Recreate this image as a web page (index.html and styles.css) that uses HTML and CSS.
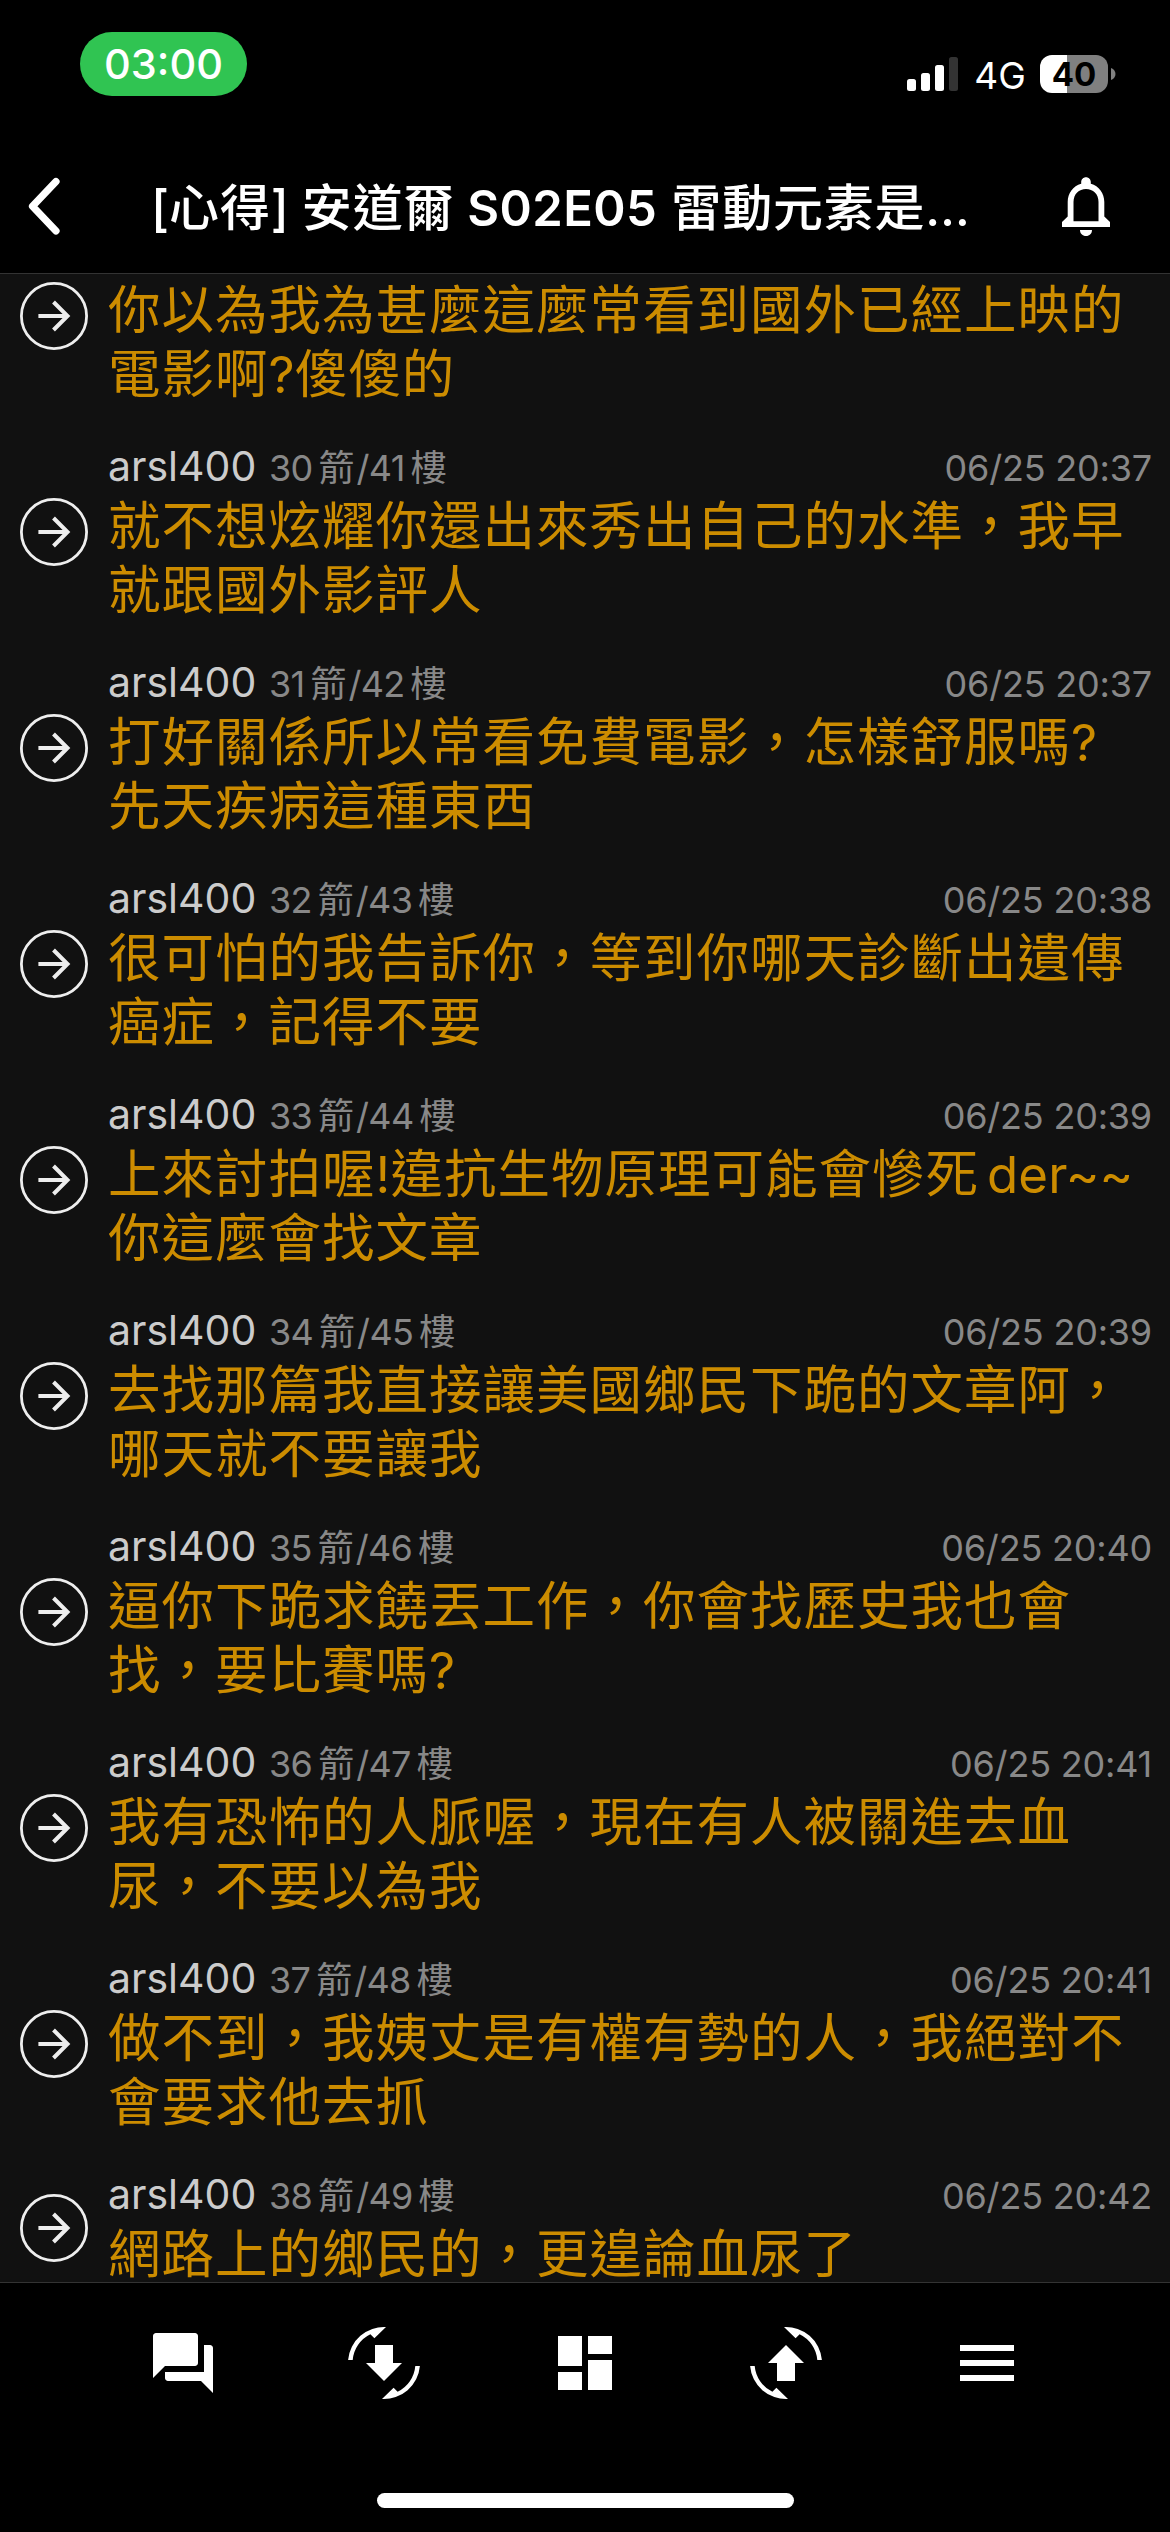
FILE: index.html
```html
<!DOCTYPE html>
<html lang="zh-Hant">
<head>
<meta charset="utf-8">
<title>[心得] 安道爾 S02E05 雷動元素是…</title>
<link rel="stylesheet" href="styles.css">
</head>
<body>
<svg class="defs" width="0" height="0" aria-hidden="true">
  <symbol id="arrow" viewBox="0 0 68 68">
    <circle cx="34" cy="34" r="32.6" fill="none" stroke="#eee" stroke-width="2.8"/>
    <path d="M18.4 34H48M33.5 20L47.500 34L33.500 48" fill="none" stroke="#eee" stroke-width="4"/>
  </symbol>
</svg>
<div class="screen">
  <div class="status">
    <div class="clock">03:00</div>
    <div class="indicators">
      <svg class="signal" width="51" height="34" viewBox="0 0 51 34" fill="#fff">
        <rect x="0" y="22" width="9" height="12" rx="2.500"/>
        <rect x="14" y="16" width="9" height="18" rx="2.500"/>
        <rect x="28" y="8" width="9" height="26" rx="2.500"/>
        <rect x="42" y="0" width="9" height="34" rx="2.500" fill="#333"/>
      </svg>
      <span class="network">4G</span>
      <div class="battery"><span class="level">40</span></div>
      <svg class="cap" width="5" height="12" viewBox="0 0 5 12"><path d="M0 0C6 2 6 10 0 12Z" fill="#808080"/></svg>
    </div>
  </div>
  <header class="nav">
    <svg class="back" width="40" height="64" viewBox="0 0 40 64"><path d="M32 7.500L8.500 32.300L32 57" fill="none" stroke="#fff" stroke-width="7.200" stroke-linecap="round" stroke-linejoin="round"/></svg>
    <h1 class="title">[<b>心得</b>] <b>安道爾</b> <i>S02E05</i> <b>雷動元素是</b>…</h1>
    <svg class="bell" width="48" height="60" viewBox="0 0 48 60" fill="#fff">
      <path fill-rule="evenodd" d="M24 .3C26.800 .3 28.800 2.500 28.800 5V6.700C37 9 42.300 16 42.300 25V39.500L48 45V50H0V45L5.700 39.500V25C5.700 16 11 9 19.200 6.700V5C19.200 2.500 21.200 .3 24 .3ZM11.500 44.200H36.500V25C36.500 17 31 12 24 12S11.500 17 11.500 25Z"/>
      <path d="M18 53H30C30 56.500 27.500 59 24 59S18 56.500 18 53Z"/>
    </svg>
  </header>
  <main class="comments">
    <article class="comment cut">
      <svg class="mark"><use href="#arrow"/></svg>
      <div class="body">
        <p class="text">你以為我為甚麼這麼常看到國外已經上映的<br>電影啊<span class="lat">?</span>傻傻的</p>
      </div>
    </article>
    <article class="comment">
      <svg class="mark"><use href="#arrow"/></svg>
      <div class="body">
        <div class="meta"><span class="name">arsl400</span><span class="floor">30<b>箭</b>/41<b>樓</b></span><time>06/25 20:37</time></div>
        <p class="text">就不想炫耀你還出來秀出自己的水準，我早<br>就跟國外影評人</p>
      </div>
    </article>
    <article class="comment">
      <svg class="mark"><use href="#arrow"/></svg>
      <div class="body">
        <div class="meta"><span class="name">arsl400</span><span class="floor">31<b>箭</b>/42<b>樓</b></span><time>06/25 20:37</time></div>
        <p class="text">打好關係所以常看免費電影，怎樣舒服嗎<span class="lat">?</span><br>先天疾病這種東西</p>
      </div>
    </article>
    <article class="comment">
      <svg class="mark"><use href="#arrow"/></svg>
      <div class="body">
        <div class="meta"><span class="name">arsl400</span><span class="floor">32<b>箭</b>/43<b>樓</b></span><time>06/25 20:38</time></div>
        <p class="text">很可怕的我告訴你，等到你哪天診斷出遺傳<br>癌症，記得不要</p>
      </div>
    </article>
    <article class="comment">
      <svg class="mark"><use href="#arrow"/></svg>
      <div class="body">
        <div class="meta"><span class="name">arsl400</span><span class="floor">33<b>箭</b>/44<b>樓</b></span><time>06/25 20:39</time></div>
        <p class="text">上來討拍喔<span class="lat">!</span>違抗生物原理可能會慘死<span class="lat word">der~~</span><br>你這麼會找文章</p>
      </div>
    </article>
    <article class="comment">
      <svg class="mark"><use href="#arrow"/></svg>
      <div class="body">
        <div class="meta"><span class="name">arsl400</span><span class="floor">34<b>箭</b>/45<b>樓</b></span><time>06/25 20:39</time></div>
        <p class="text">去找那篇我直接讓美國鄉民下跪的文章阿，<br>哪天就不要讓我</p>
      </div>
    </article>
    <article class="comment">
      <svg class="mark"><use href="#arrow"/></svg>
      <div class="body">
        <div class="meta"><span class="name">arsl400</span><span class="floor">35<b>箭</b>/46<b>樓</b></span><time>06/25 20:40</time></div>
        <p class="text">逼你下跪求饒丟工作，你會找歷史我也會<br>找，要比賽嗎<span class="lat">?</span></p>
      </div>
    </article>
    <article class="comment">
      <svg class="mark"><use href="#arrow"/></svg>
      <div class="body">
        <div class="meta"><span class="name">arsl400</span><span class="floor">36<b>箭</b>/47<b>樓</b></span><time>06/25 20:41</time></div>
        <p class="text">我有恐怖的人脈喔，現在有人被關進去血<br>尿，不要以為我</p>
      </div>
    </article>
    <article class="comment">
      <svg class="mark"><use href="#arrow"/></svg>
      <div class="body">
        <div class="meta"><span class="name">arsl400</span><span class="floor">37<b>箭</b>/48<b>樓</b></span><time>06/25 20:41</time></div>
        <p class="text">做不到，我姨丈是有權有勢的人，我絕對不<br>會要求他去抓</p>
      </div>
    </article>
    <article class="comment">
      <svg class="mark"><use href="#arrow"/></svg>
      <div class="body">
        <div class="meta"><span class="name">arsl400</span><span class="floor">38<b>箭</b>/49<b>樓</b></span><time>06/25 20:42</time></div>
        <p class="text">網路上的鄉民的，更遑論血尿了</p>
      </div>
    </article>
  </main>
  <footer class="tabs">
    <nav class="tab-row">
      <svg viewBox="0 0 24 24"><path d="M21 6h-2v9H6v2c0 .55.45 1 1 1h11l4 4V7c0-.55-.45-1-1-1zm-4 6V3c0-.55-.45-1-1-1H3c-.55 0-1 .45-1 1v14l4-4h10c.55 0 1-.45 1-1z"/></svg>
      <svg viewBox="-36 -36 72 72">
        <path d="M-35.900 -3A36 36 0 0 1 2 -35.900L-9.600 -24.700L-13.600 -28.700A31.500 31.500 0 0 0 -31.300 -3Z"/>
        <path d="M35.900 3A36 36 0 0 1 -2 35.900L9.600 24.700L13.600 28.700A31.500 31.500 0 0 0 31.300 3Z"/>
        <path d="M-9 -18H9V0H18L0 18L-18 0H-9Z"/>
      </svg>
      <svg viewBox="0 0 24 24"><path d="M3 13h8V3H3v10zm0 8h8v-6H3v6zm10 0h8V11h-8v10zm0-18v6h8V3h-8z"/></svg>
      <svg viewBox="-36 -36 72 72">
        <path d="M35.900 -3A36 36 0 0 0 -2 -35.900L9.600 -24.700L13.600 -28.700A31.500 31.500 0 0 1 31.300 -3Z"/>
        <path d="M-35.900 3A36 36 0 0 0 2 35.900L-9.600 24.700L-13.600 28.700A31.500 31.500 0 0 1 -31.300 3Z"/>
        <path d="M-9 18H9V0H18L0 -18L-18 0H-9Z"/>
      </svg>
      <svg viewBox="0 0 24 24"><path d="M3 18h18v-2H3v2zm0-5h18v-2H3v2zm0-7v2h18V6H3z"/></svg>
    </nav>
    <div class="home"></div>
  </footer>
</div>
</body>
</html>
```
FILE: styles.css
```css
* { box-sizing: border-box; }
body {
  margin: 0;
  background: #000;
  font-family: Inter, "Noto Sans CJK TC", sans-serif;
}
b, i { font-weight: inherit; font-style: normal; }
.defs { display: block; }
.screen {
  width: 1170px;
  height: 2532px;
  display: flex;
  flex-direction: column;
  overflow: hidden;
}

/* Status bar */
.status {
  height: 140px;
  display: flex;
  justify-content: space-between;
  align-items: flex-start;
  padding: 32px 54px 0 80px;
  color: #fff;
}
.clock {
  width: 167px;
  height: 64px;
  border-radius: 32px;
  background: #30c452;
  font-size: 41.500px;
  font-weight: 500;
  line-height: 64px;
  text-align: center;
}
.indicators {
  display: flex;
  align-items: flex-start;
  padding-top: 23px;
}
.signal { margin: 2px 15px 0 0; }
.network {
  width: 54px;
  margin: 1px 13px 0 0;
  font-size: 37px;
  line-height: 40px;
  text-align: center;
}
.battery {
  width: 68px;
  height: 38px;
  border-radius: 12px;
  background: linear-gradient(90deg, #fff 27px, #808080 27px);
  color: #000;
  font-size: 33px;
  font-weight: 700;
  line-height: 38px;
  text-align: center;
}
.cap { margin: 13px 0 0 3px; }

/* Title bar */
.nav {
  height: 134px;
  display: flex;
  align-items: flex-start;
  padding: 34px 60px 0 24px;
  border-bottom: 1px solid #333;
}
.title {
  flex: 1;
  margin: 0 0 0 87px;
  color: #fff;
  font-size: 49px;
  font-weight: 500;
  line-height: 68px;
  white-space: nowrap;
}
.title b { font-size: 50px; letter-spacing: .8px; }
.title i { margin-right: 1px; font-weight: 600; letter-spacing: .4px; }
.bell { margin-top: 3px; }

/* Comment list */
.comments {
  height: 2008px;
  background: #111;
  overflow: hidden;
}
.comment {
  display: flex;
  align-items: center;
  gap: 20px;
  padding: 19px 18px 18px 20px;
}
.comment.cut {
  align-items: flex-start;
  padding-top: 4px;
}
.cut .mark { margin-top: 4px; }
.mark { flex: none; width: 68px; height: 68px; margin-top: -1px; }
.body { flex: 1; }
.meta {
  display: flex;
  align-items: baseline;
  height: 51px;
  line-height: 47px;
  color: #888;
  font-size: 36px;
}
.name {
  width: 161px;
  color: #ccc;
  font-size: 41px;
}
.floor { letter-spacing: -.7px; }
.floor b { margin: 0 2px 0 6px; letter-spacing: 0; }
time { margin-left: auto; letter-spacing: -.2px; }
.text {
  margin: 0;
  color: #cc8c00;
  font-size: 52.500px;
  line-height: 64px;
  letter-spacing: 1px;
  white-space: nowrap;
}
.comment:last-child { padding-bottom: 0; align-items: flex-start; }
.comment:last-child .mark { margin-top: 23px; }
.comment:last-child .text { height: 60px; line-height: 62px; padding-top: 1px; }
.lat { font-size: 51px; letter-spacing: .2px; line-height: 1; }
.word { margin-left: 8px; }

/* Bottom toolbar */
.tabs {
  flex: 1;
  display: flex;
  flex-direction: column;
  align-items: center;
  border-top: 1px solid #333;
}
.tab-row {
  display: flex;
  gap: 129px;
  padding-top: 44px;
}
.tab-row svg { width: 72px; height: 72px; fill: #fff; }
.home {
  width: 417px;
  height: 15px;
  margin-top: 94px;
  border-radius: 8px;
  background: #fff;
}
```
